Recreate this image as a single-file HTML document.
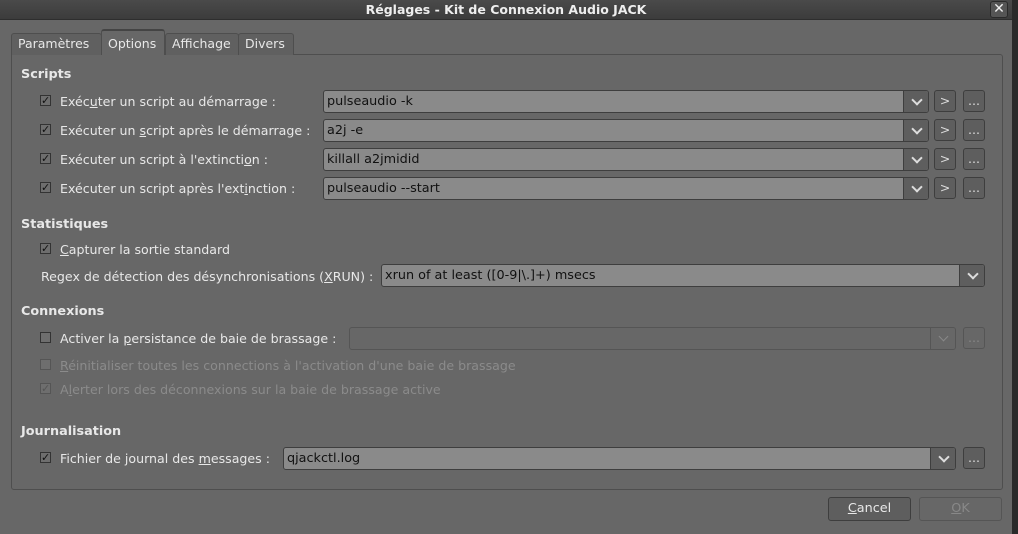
<!DOCTYPE html>
<html><head><meta charset="utf-8"><style>
*{box-sizing:border-box;margin:0;padding:0}
body{width:1018px;height:534px;background:#676767;font-family:"DejaVu Sans","Liberation Sans",sans-serif;font-size:12.6px;color:#e8e8e8;position:relative;overflow:hidden}
.a{position:absolute;white-space:nowrap}
#title{left:0;top:0;width:1012px;height:20px;background:linear-gradient(#4a4a4a,#3c3c3c);border-bottom:1px solid #2e2e2e;text-align:center;font-weight:bold;line-height:20px;font-size:12.5px;color:#eee}
#rs{left:1012px;top:0;width:6px;height:534px;background:#2a2a2a}
#x{left:990px;top:1px;width:18px;height:17px;border:1px solid #2a2a2a;border-radius:3px;background:#555;color:#eee;font-weight:bold;text-align:center;line-height:15px;font-size:14px}
.tab{top:33px;height:22px;border:1px solid #4e4e4e;border-bottom:none;border-radius:3px 3px 0 0;background:#606060;line-height:20px;padding:0 6px;font-size:12.5px}
#panel{left:11px;top:54px;width:992px;height:436px;border:1px solid #4e4e4e;border-radius:0 3px 3px 3px}
.h{font-weight:bold;font-size:12.8px}
.cb{width:11px;height:11px;border:1px solid #333;background:#6e6e6e;font-size:11px;line-height:9px;text-align:center;color:#111;font-weight:bold}
.cb.d{border-color:#555;color:#555}
.lab{line-height:14px;top:0}
.dis{color:#8b8b8b}
.combo{height:23px;border:1px solid #3e3e3e;border-radius:3px;background:#8a8a8a;color:#111;padding-left:3px;line-height:21px;font-size:12.8px}
.combo .arr{position:absolute;right:0;top:0;width:25px;height:21px;background:#5e5e5e;border-left:1px solid #3e3e3e;border-radius:0 2px 2px 0}
.combo .arr:after{content:"";position:absolute;left:9px;top:5px;width:6px;height:6px;border-right:2px solid #ddd;border-bottom:2px solid #ddd;transform:rotate(45deg)}
.combo.d{background:#676767;border-color:#555}
.combo.d .arr{background:#676767;border-color:#555}
.combo.d .arr:after{border-color:#888;border-width:1px}
.btn{width:22px;height:22px;border:1px solid #3e3e3e;border-radius:3px;background:#5e5e5e;text-align:center;line-height:19px;color:#ddd}
.btn.d{border-color:#555;background:#676767;color:#888}
.pb{top:497px;width:83px;height:24px;border:1px solid #3e3e3e;border-radius:3px;background:#5e5e5e;text-align:center;line-height:22px;font-size:12.8px}
u{text-decoration:underline}
</style></head><body>
<div class="a" id="title">Réglages - Kit de Connexion Audio JACK</div>
<div class="a" id="x">✕</div>
<div class="a" id="rs"></div>
<div class="a" id="panel"></div>
<div class="a tab" style="left:11px;width:91px">Paramètres</div>
<div class="a tab" style="left:101px;top:29px;height:26px;width:64px;background:#676767;border-color:#4e4e4e;line-height:26px;border-top:2px solid #444">Options</div>
<div class="a tab" style="left:165px;width:74px">Affichage</div>
<div class="a tab" style="left:238px;width:56px">Divers</div>
<div class="a" style="left:102px;top:54px;width:62px;height:1px;background:#676767"></div>

<div class="a h" style="left:21px;top:67px">Scripts</div>

<div class="a cb" style="left:40px;top:95px">✓</div><div class="a lab" style="left:60px;top:95px">Exéc<u>u</u>ter un script au démarrage :</div>
<div class="a combo" style="left:323px;top:90px;width:606px">pulseaudio -k<div class="arr"></div></div>
<div class="a btn" style="left:934px;top:90px">&gt;</div><div class="a btn" style="left:963px;top:90px">...</div>

<div class="a cb" style="left:40px;top:124px">✓</div><div class="a lab" style="left:60px;top:124px">Exécuter un <u>s</u>cript après le démarrage :</div>
<div class="a combo" style="left:323px;top:119px;width:606px">a2j -e<div class="arr"></div></div>
<div class="a btn" style="left:934px;top:119px">&gt;</div><div class="a btn" style="left:963px;top:119px">...</div>

<div class="a cb" style="left:40px;top:153px">✓</div><div class="a lab" style="left:60px;top:153px">Exécuter un script à l'extincti<u>o</u>n :</div>
<div class="a combo" style="left:323px;top:148px;width:606px">killall a2jmidid<div class="arr"></div></div>
<div class="a btn" style="left:934px;top:148px">&gt;</div><div class="a btn" style="left:963px;top:148px">...</div>

<div class="a cb" style="left:40px;top:182px">✓</div><div class="a lab" style="left:60px;top:182px">Exécuter un script après l'ext<u>i</u>nction :</div>
<div class="a combo" style="left:323px;top:177px;width:606px">pulseaudio --start<div class="arr"></div></div>
<div class="a btn" style="left:934px;top:177px">&gt;</div><div class="a btn" style="left:963px;top:177px">...</div>

<div class="a h" style="left:21px;top:217px">Statistiques</div>
<div class="a cb" style="left:40px;top:243px">✓</div><div class="a lab" style="left:60px;top:243px"><u>C</u>apturer la sortie standard</div>
<div class="a lab" style="left:41px;top:270px">Regex de détection des désynchronisations (<u>X</u>RUN) :</div>
<div class="a combo" style="left:381px;top:264px;width:604px">xrun of at least ([0-9|\.]+) msecs<div class="arr"></div></div>

<div class="a h" style="left:21px;top:304px">Connexions</div>
<div class="a cb" style="left:40px;top:332px"></div><div class="a lab" style="left:60px;top:332px">Activer la <u>p</u>ersistance de baie de brassage :</div>
<div class="a combo d" style="left:349px;top:327px;width:607px"><div class="arr"></div></div>
<div class="a btn d" style="left:963px;top:327px">...</div>
<div class="a cb d" style="left:40px;top:359px"></div><div class="a lab dis" style="left:60px;top:359px"><u>R</u>éinitialiser toutes les connections à l'activation d'une baie de brassage</div>
<div class="a cb d" style="left:40px;top:383px">✓</div><div class="a lab dis" style="left:60px;top:383px">A<u>l</u>erter lors des déconnexions sur la baie de brassage active</div>

<div class="a h" style="left:21px;top:424px">Journalisation</div>
<div class="a cb" style="left:40px;top:452px">✓</div><div class="a lab" style="left:60px;top:452px">Fichier de journal des <u>m</u>essages :</div>
<div class="a combo" style="left:283px;top:447px;width:673px">qjackctl.log<div class="arr"></div></div>
<div class="a btn" style="left:963px;top:447px">...</div>

<div class="a pb" style="left:828px"><u>C</u>ancel</div>
<div class="a pb" style="left:919px;background:#676767;border-color:#555;color:#888"><u>O</u>K</div>
</body></html>
